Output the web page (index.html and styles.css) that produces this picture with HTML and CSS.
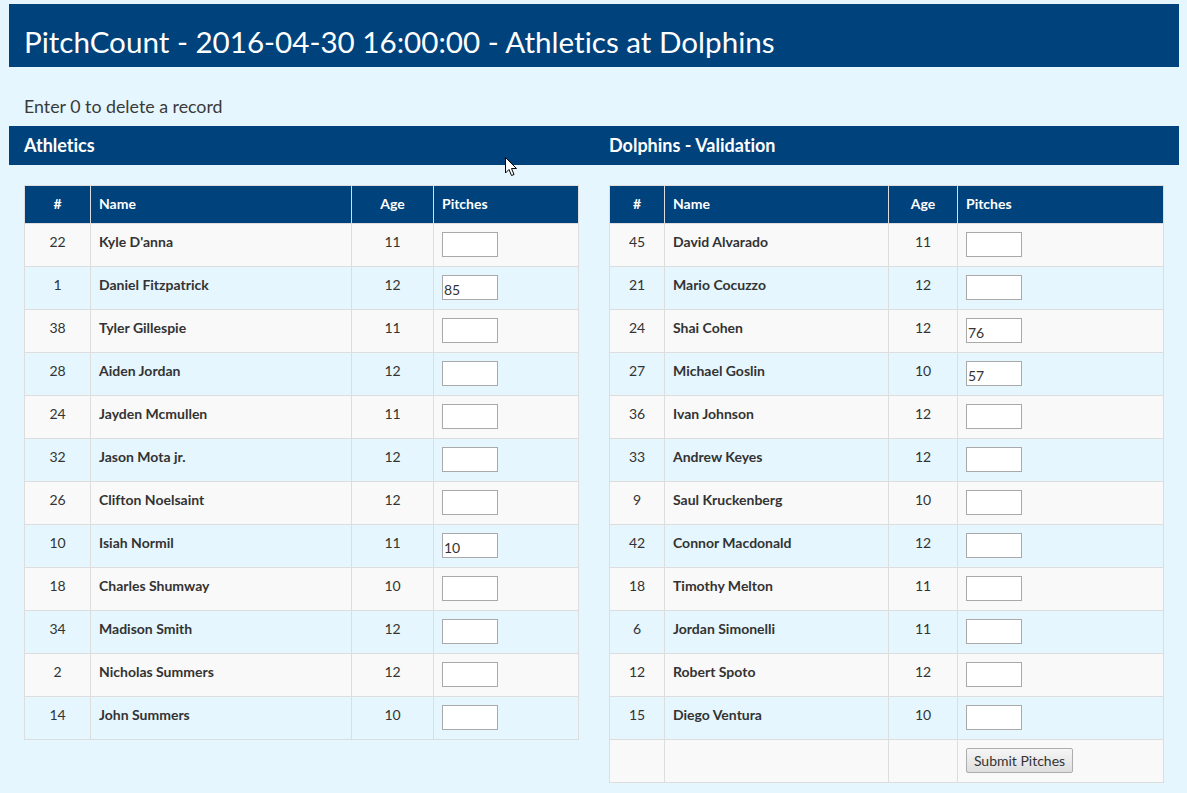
FILE: index.html
```html
<!DOCTYPE html>
<html>
<head>
<meta charset="utf-8">
<link rel="stylesheet" href="styles.css">
</head>
<body>
<div class="page">
  <h1 class="title">PitchCount - 2016-04-30 16:00:00 - Athletics at Dolphins</h1>
  <p class="note">Enter 0 to delete a record</p>
  <div class="sections">
    <div class="section">
      <h4 class="section-title">Athletics</h4>
      <div class="section-body">
        <table class="roster">
          <colgroup><col class="c-num-l"><col class="c-name-l"><col class="c-age-l"><col></colgroup>
          <thead><tr><th class="center">#</th><th>Name</th><th class="center">Age</th><th>Pitches</th></tr></thead>
          <tbody>
            <tr><td class="center">22</td><td class="name">Kyle D'anna</td><td class="center">11</td><td><input class="pitch" type="text" value=""></td></tr>
            <tr><td class="center">1</td><td class="name">Daniel Fitzpatrick</td><td class="center">12</td><td><input class="pitch" type="text" value="85"></td></tr>
            <tr><td class="center">38</td><td class="name">Tyler Gillespie</td><td class="center">11</td><td><input class="pitch" type="text" value=""></td></tr>
            <tr><td class="center">28</td><td class="name">Aiden Jordan</td><td class="center">12</td><td><input class="pitch" type="text" value=""></td></tr>
            <tr><td class="center">24</td><td class="name">Jayden Mcmullen</td><td class="center">11</td><td><input class="pitch" type="text" value=""></td></tr>
            <tr><td class="center">32</td><td class="name">Jason Mota jr.</td><td class="center">12</td><td><input class="pitch" type="text" value=""></td></tr>
            <tr><td class="center">26</td><td class="name">Clifton Noelsaint</td><td class="center">12</td><td><input class="pitch" type="text" value=""></td></tr>
            <tr><td class="center">10</td><td class="name">Isiah Normil</td><td class="center">11</td><td><input class="pitch" type="text" value="10"></td></tr>
            <tr><td class="center">18</td><td class="name">Charles Shumway</td><td class="center">10</td><td><input class="pitch" type="text" value=""></td></tr>
            <tr><td class="center">34</td><td class="name">Madison Smith</td><td class="center">12</td><td><input class="pitch" type="text" value=""></td></tr>
            <tr><td class="center">2</td><td class="name">Nicholas Summers</td><td class="center">12</td><td><input class="pitch" type="text" value=""></td></tr>
            <tr><td class="center">14</td><td class="name">John Summers</td><td class="center">10</td><td><input class="pitch" type="text" value=""></td></tr>
          </tbody>
        </table>
      </div>
    </div>
    <div class="section">
      <h4 class="section-title">Dolphins - Validation</h4>
      <div class="section-body">
        <table class="roster">
          <colgroup><col class="c-num-r"><col class="c-name-r"><col class="c-age-r"><col></colgroup>
          <thead><tr><th class="center">#</th><th>Name</th><th class="center">Age</th><th>Pitches</th></tr></thead>
          <tbody>
            <tr><td class="center">45</td><td class="name">David Alvarado</td><td class="center">11</td><td><input class="pitch" type="text" value=""></td></tr>
            <tr><td class="center">21</td><td class="name">Mario Cocuzzo</td><td class="center">12</td><td><input class="pitch" type="text" value=""></td></tr>
            <tr><td class="center">24</td><td class="name">Shai Cohen</td><td class="center">12</td><td><input class="pitch" type="text" value="76"></td></tr>
            <tr><td class="center">27</td><td class="name">Michael Goslin</td><td class="center">10</td><td><input class="pitch" type="text" value="57"></td></tr>
            <tr><td class="center">36</td><td class="name">Ivan Johnson</td><td class="center">12</td><td><input class="pitch" type="text" value=""></td></tr>
            <tr><td class="center">33</td><td class="name">Andrew Keyes</td><td class="center">12</td><td><input class="pitch" type="text" value=""></td></tr>
            <tr><td class="center">9</td><td class="name">Saul Kruckenberg</td><td class="center">10</td><td><input class="pitch" type="text" value=""></td></tr>
            <tr><td class="center">42</td><td class="name">Connor Macdonald</td><td class="center">12</td><td><input class="pitch" type="text" value=""></td></tr>
            <tr><td class="center">18</td><td class="name">Timothy Melton</td><td class="center">11</td><td><input class="pitch" type="text" value=""></td></tr>
            <tr><td class="center">6</td><td class="name">Jordan Simonelli</td><td class="center">11</td><td><input class="pitch" type="text" value=""></td></tr>
            <tr><td class="center">12</td><td class="name">Robert Spoto</td><td class="center">12</td><td><input class="pitch" type="text" value=""></td></tr>
            <tr><td class="center">15</td><td class="name">Diego Ventura</td><td class="center">10</td><td><input class="pitch" type="text" value=""></td></tr>
            <tr><td></td><td></td><td></td><td><button class="submit" type="button">Submit Pitches</button></td></tr>
          </tbody>
        </table>
      </div>
    </div>
  </div>
  <svg class="cursor" width="13" height="20" viewBox="0 0 13 20"><path d="M0.5 0.5 L0.5 16 L4 12.5 L6.5 18.5 L9 17.5 L6.5 11.5 L11.5 11.5 Z" fill="#fff" stroke="#000" stroke-width="1"/></svg>
</div>
</body>
</html>
```
FILE: styles.css
```css
* { box-sizing: border-box; }
html, body { margin: 0; padding: 0; }
body {
  background: #e5f6fe;
  font-family: Lato, "Open Sans", sans-serif;
  font-variant-ligatures: none;
  color: #333;
  font-size: 14px;
}
.page {
  position: relative;
  padding: 4px 8px 0 9px;
}
.title {
  margin: 0;
  height: 63px;
  background: #00427c;
  color: #fff;
  font-weight: 400;
  font-size: 29.6px;
  line-height: 36px;
  padding: 20px 15px 0 15px;
}
.note {
  margin: 0;
  padding: 0 15px;
  height: 59px;
  line-height: 20px;
  padding-top: 29px;
  font-size: 17.8px;
  color: #3a3a3a;
}
.sections {
  display: flex;
}
.section {
  flex: 1 1 0;
  min-width: 0;
}
.section-title {
  margin: 0;
  height: 39px;
  line-height: 39px;
  background: #00427c;
  color: #fff;
  font-size: 18px;
  font-weight: 700;
  padding: 0 15px;
}
.section-body {
  padding: 20px 15px 0 15px;
}
.roster {
  width: 555px;
  border-collapse: collapse;
  table-layout: fixed;
  border: 1px solid #ddd;
}
.c-num-l { width: 66px; }
.c-name-l { width: 261px; }
.c-age-l { width: 82px; }
.c-num-r { width: 55px; }
.c-name-r { width: 224px; }
.c-age-r { width: 69px; }
.roster th {
  background: #00427c;
  color: #fff;
  font-weight: 700;
  font-size: 14px;
  text-align: left;
  height: 38px;
  padding: 0 8px 2px 8px;
  border-left: 1px solid #ddd;
  vertical-align: middle;
}
.roster td {
  height: 43px;
  padding: 8px 8px 0 8px;
  line-height: 20px;
  vertical-align: top;
  border: 1px solid #ddd;
  font-size: 14px;
  color: #333;
}
.roster tbody tr:nth-child(odd) td { background: #f9f9f9; }
.roster .center { text-align: center; }
.roster td.name { font-weight: 700; }
.pitch {
  display: block;
  width: 56px;
  height: 25px;
  margin: 0;
  border: 1px solid #a9a9a9;
  background: #fff;
  font-family: Lato, sans-serif;
  font-size: 14px;
  color: #333;
  padding: 3px 1px 0 1px;
}
.submit {
  display: block;
  margin: 0;
  width: 107px;
  height: 25px;
  font-family: Lato, sans-serif;
  font-size: 14px;
  color: #333;
  background: linear-gradient(#f6f6f6, #dedede);
  border: 1px solid #adadad;
  border-radius: 2px;
  padding: 0;
}
.cursor {
  position: absolute;
  left: 505px;
  top: 157px;
}
```
